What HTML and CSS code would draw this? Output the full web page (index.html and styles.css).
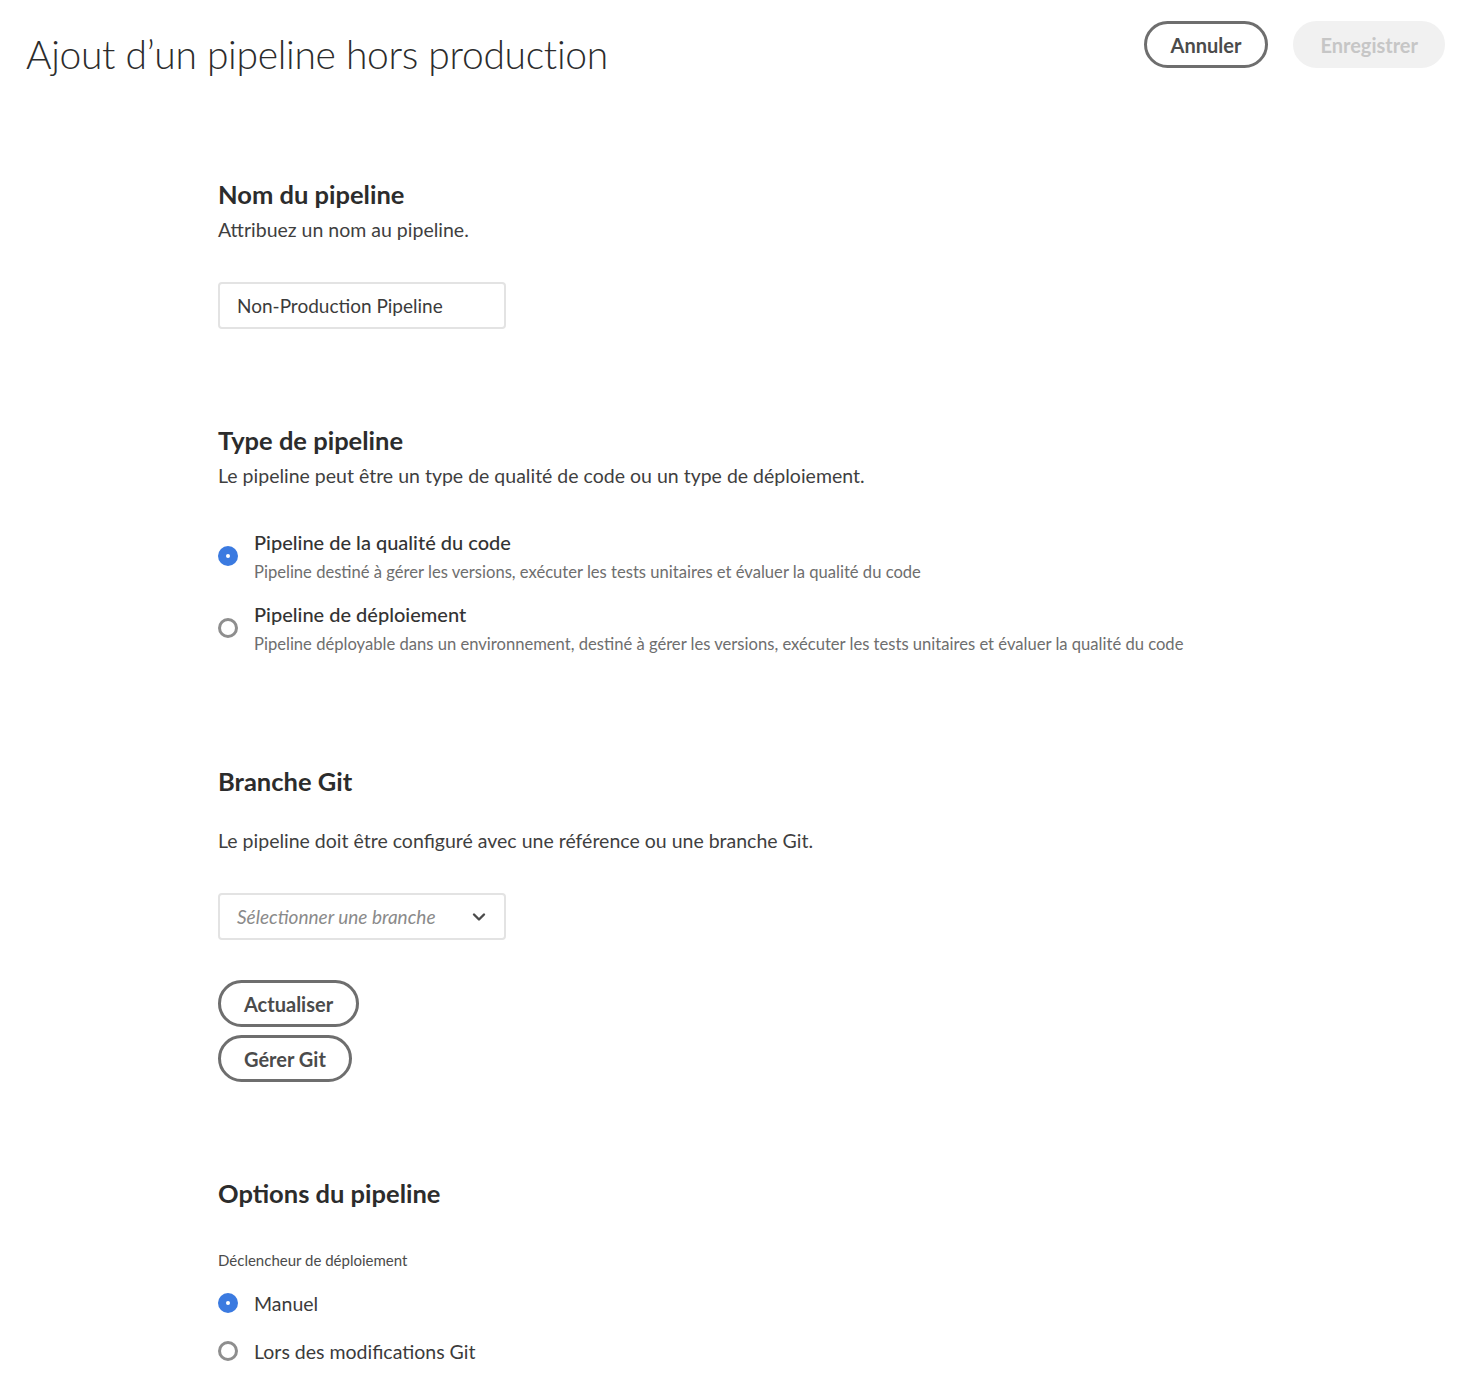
FILE: index.html
```html
<!DOCTYPE html>
<html lang="fr">
<head>
<meta charset="utf-8">
<title>Ajout d'un pipeline hors production</title>
<link rel="stylesheet" href="styles.css">
</head>
<body>
<header class="topbar">
  <h1 class="page-title">Ajout d’un pipeline hors production</h1>
  <div class="actions">
    <button class="btn btn-outline">Annuler</button>
    <button class="btn btn-disabled">Enregistrer</button>
  </div>
</header>
<main class="form">
  <section class="section s-name">
    <h2 class="sec-title">Nom du pipeline</h2>
    <p class="sec-desc">Attribuez un nom au pipeline.</p>
    <div class="field">Non-Production Pipeline</div>
  </section>

  <section class="section s-type">
    <h2 class="sec-title">Type de pipeline</h2>
    <p class="sec-desc">Le pipeline peut être un type de qualité de code ou un type de déploiement.</p>
    <div class="radio-list">
      <div class="radio-row">
        <span class="radio checked"></span>
        <div class="radio-text">
          <div class="radio-label">Pipeline de la qualité du code</div>
          <div class="radio-sub">Pipeline destiné à gérer les versions, exécuter les tests unitaires et évaluer la qualité du code</div>
        </div>
      </div>
      <div class="radio-row">
        <span class="radio"></span>
        <div class="radio-text">
          <div class="radio-label">Pipeline de déploiement</div>
          <div class="radio-sub">Pipeline déployable dans un environnement, destiné à gérer les versions, exécuter les tests unitaires et évaluer la qualité du code</div>
        </div>
      </div>
    </div>
  </section>

  <section class="section s-git">
    <h2 class="sec-title">Branche Git</h2>
    <p class="sec-desc git-desc">Le pipeline doit être configuré avec une référence ou une branche Git.</p>
    <div class="field select">
      <span class="placeholder">Sélectionner une branche</span>
      <svg class="chev" width="14" height="10" viewBox="0 0 14 10"><path d="M2 2.5 L7 7.5 L12 2.5" fill="none" stroke="#4b4b4b" stroke-width="2.4" stroke-linecap="round" stroke-linejoin="round"/></svg>
    </div>
    <div class="git-buttons">
      <button class="btn btn-outline">Actualiser</button>
      <button class="btn btn-outline">Gérer Git</button>
    </div>
  </section>

  <section class="section s-options">
    <h2 class="sec-title">Options du pipeline</h2>
    <div class="field-label">Déclencheur de déploiement</div>
    <div class="simple-radio first"><span class="radio checked"></span><span class="simple-label">Manuel</span></div>
    <div class="simple-radio"><span class="radio"></span><span class="simple-label">Lors des modifications Git</span></div>
  </section>
</main>
</body>
</html>
```
FILE: styles.css
```css
* { box-sizing: border-box; }
html, body { margin: 0; padding: 0; background: #fff; }
body {
  font-family: "Lato", "Liberation Sans", sans-serif;
  color: #2c2c2c;
  width: 1464px;
  min-height: 1394px;
}
.topbar {
  display: flex;
  justify-content: space-between;
  align-items: flex-start;
  padding: 21px 19px 0 26px;
}
.page-title {
  margin: 8px 0 0;
  font-weight: 300;
  font-size: 39px;
  line-height: 50px;
  color: #2c2c2c;
  letter-spacing: -0.3px;
}
.actions { display: flex; gap: 25px; }
.btn {
  font-family: inherit;
  height: 47px;
  border-radius: 24px;
  font-size: 20px;
  font-weight: 700;
  padding: 0 21px;
  cursor: pointer;
}
.btn-outline {
  background: #fff;
  border: 3px solid #6e6e6e;
  color: #4b4b4b;
}
.actions .btn-outline { padding: 0 24px; }
.btn-disabled {
  background: #f1f1f1;
  border: 3px solid #f1f1f1;
  color: #c6c6c6;
  padding: 0 24px;
}
.form { padding-left: 218px; }
.s-name { margin-top: 100px; }
.sec-title {
  margin: 0;
  font-size: 25.5px;
  line-height: 30px;
  font-weight: 700;
  color: #2c2c2c;
}
.sec-desc {
  margin: 9px 0 0;
  font-size: 19.5px;
  line-height: 24px;
  color: #3f3f3f;
}
.field {
  margin-top: 40px;
  width: 288px;
  height: 47px;
  border: 2px solid #e3e3e3;
  border-radius: 4px;
  padding: 0 17px;
  display: flex;
  align-items: center;
  font-size: 19px;
  color: #3b3b3b;
}
.s-type { margin-top: 96px; }
.radio-list { margin-top: 41px; display: flex; flex-direction: column; gap: 18px; }
.radio-row { display: flex; align-items: center; gap: 16px; }
.radio {
  flex: none;
  width: 20px;
  height: 20px;
  border-radius: 50%;
  border: 3px solid #8e8e8e;
  background: #fff;
  position: relative;
}
.radio.checked {
  border: none;
  background: #3b7ae0;
}
.radio.checked::after {
  content: "";
  position: absolute;
  left: 8px; top: 8px;
  width: 4px; height: 4px;
  border-radius: 50%;
  background: #fff;
}
.radio-label { font-size: 20px; line-height: 26px; font-weight: 500; color: #333; }
.radio-sub { font-size: 16.6px; line-height: 22px; color: #6e6e6e; margin-top: 6px; }
.s-git { margin-top: 111px; }
.git-desc { margin-top: 33px; }
.select { margin-top: 40px; justify-content: space-between; padding-right: 18px; }
.placeholder { font-style: italic; color: #8a8a8a; }
.git-buttons { margin-top: 40px; display: flex; flex-direction: column; align-items: flex-start; gap: 8px; }
.git-buttons .btn { padding: 0 23px; }
.s-options { margin-top: 96px; }
.field-label { margin-top: 42px; font-size: 15px; line-height: 20px; color: #4b4b4b; }
.simple-radio { display: flex; align-items: center; gap: 16px; height: 26px; margin-top: 22px; }
.simple-radio.first { margin-top: 20px; }
.simple-label { font-size: 19.5px; color: #3b3b3b; }
```
